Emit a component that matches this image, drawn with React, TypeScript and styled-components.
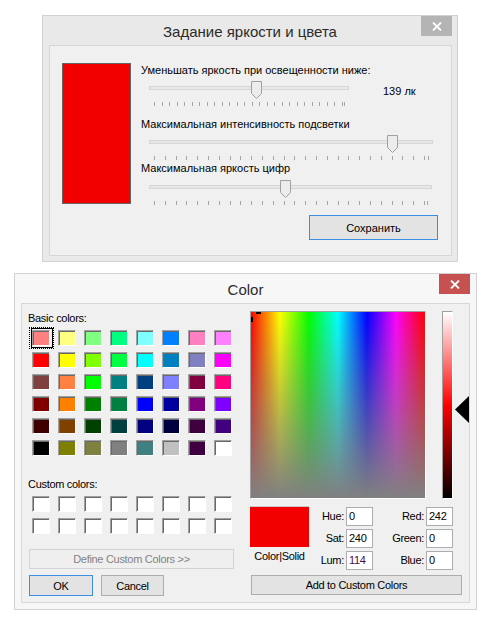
import React from "react";
import styled, { createGlobalStyle } from "styled-components";

const GlobalStyle = createGlobalStyle`
  html, body {
    margin: 0;
    padding: 0;
    background: #ffffff;
  }
  body {
    font-family: "Liberation Sans", Arial, sans-serif;
    color: #000000;
  }
  * {
    box-sizing: border-box;
  }
`;

const Page = styled.div`
  width: 495px;
  height: 627px;
  padding-top: 15px;
  display: flex;
  flex-direction: column;
`;

const Window = styled.div<{ $left: number; $top: number; $width: number; $height: number; $frame: string }>`
  margin-left: ${(p) => p.$left}px;
  margin-top: ${(p) => p.$top}px;
  width: ${(p) => p.$width}px;
  height: ${(p) => p.$height}px;
  background: ${(p) => p.$frame};
  border: 1px solid #d2d2d2;
  display: flex;
  flex-direction: column;
`;

const TitleBar = styled.div`
  height: 29px;
  display: grid;
  grid-template-columns: 1fr auto 1fr;
  align-items: center;
`;

const Title = styled.div`
  grid-column: 2;
  font-size: 15px;
  color: #2b2b2b;
  padding-top: 1px;
`;

const CloseButton = styled.div<{ $bg: string; $right: number }>`
  grid-column: 3;
  justify-self: end;
  align-self: start;
  margin-right: ${(p) => p.$right}px;
  width: 31px;
  height: 20px;
  background: ${(p) => p.$bg};
  display: flex;
  align-items: center;
  justify-content: center;
`;

const Panel = styled.div<{ $height: number; $side: number }>`
  margin: 0 ${(p) => p.$side}px 0 6px;
  height: ${(p) => p.$height}px;
  background: #f0f0f0;
  border: 1px solid #d7d7d7;
  display: flex;
  align-items: flex-start;
`;

/* ---------- brightness window ---------- */

const BrightnessBody = styled(Panel)`
  padding: 16px 13px 0 12px;
  gap: 10px;
`;

const ColorBlock = styled.div`
  margin-top: 1px;
  width: 69px;
  height: 141px;
  background: #f20000;
  border: 1px solid #646464;
  flex-shrink: 0;
`;

const SettingsColumn = styled.div`
  flex: 1;
  display: flex;
  flex-direction: column;
`;

const Label = styled.div<{ $mt?: number }>`
  margin-top: ${(p) => p.$mt ?? 0}px;
  font-size: 11px;
  line-height: 16px;
  white-space: nowrap;
`;

const SliderRow = styled.div<{ $mt: number }>`
  margin-top: ${(p) => p.$mt}px;
  display: flex;
  align-items: flex-start;
`;

const SliderBox = styled.div<{ $w: number }>`
  position: relative;
  width: ${(p) => p.$w}px;
  height: 26px;
  margin-left: 8px;
`;

const Track = styled.div`
  margin-top: 6px;
  height: 4px;
  border: 1px solid #d6d6d6;
  background: #e7e7e7;
`;

const Thumb = styled.svg`
  position: absolute;
  top: 1px;
`;

const TickStrip = styled.svg`
  display: block;
  margin-top: 12px;
`;

const ValueText = styled.div`
  margin-left: 34px;
  margin-top: 3px;
  font-size: 11px;
  line-height: 16px;
`;

const Button = styled.button<{ $w: number; $h: number; $default?: boolean; $mt?: number; $ml?: number }>`
  width: ${(p) => p.$w}px;
  height: ${(p) => p.$h}px;
  margin-top: ${(p) => p.$mt ?? 0}px;
  margin-left: ${(p) => p.$ml ?? 0}px;
  padding: 0;
  font-family: inherit;
  font-size: 11px;
  letter-spacing: inherit;
  color: #000000;
  background: #e3e3e3;
  border: 1px solid ${(p) => (p.$default ? "#3d8ee0" : "#adadad")};
  flex-shrink: 0;

  &:disabled {
    color: #838383;
    background: #efefef;
    border-color: #d3d3d3;
  }
`;

const SaveButton = styled(Button)`
  align-self: flex-end;
`;

/* ---------- color dialog ---------- */

const DialogBody = styled(Panel)`
  padding: 6px 0 0 6px;
  gap: 16px;
  letter-spacing: -0.3px;
`;

const LeftColumn = styled.div`
  width: 206px;
  display: flex;
  flex-direction: column;
`;

const SwatchGrid = styled.div<{ $mt: number }>`
  margin-top: ${(p) => p.$mt}px;
  margin-left: 4px;
  display: grid;
  grid-template-columns: repeat(8, 18px);
  grid-auto-rows: 16px;
  column-gap: 8px;
  row-gap: 6px;
`;

const Swatch = styled.div<{ $color: string; $selected?: boolean }>`
  position: relative;
  background: ${(p) => p.$color};
  border: 1px solid;
  border-color: #a0a0a0 #ffffff #ffffff #a0a0a0;
  box-shadow: inset 1px 1px 0 #696969;

  ${(p) =>
    p.$selected &&
    `
    &::before {
      content: "";
      position: absolute;
      top: -3px;
      left: -2px;
      right: -4px;
      bottom: -3px;
      border: 1px solid #000000;
    }
    &::after {
      content: "";
      position: absolute;
      top: -4px;
      left: -4px;
      right: -5px;
      bottom: -4px;
      border: 1px dotted #000000;
    }
  `}
`;

const ButtonRow = styled.div`
  margin-top: 6px;
  margin-left: 1px;
  display: flex;
  gap: 8px;
`;

const RightColumn = styled.div`
  margin-top: 1px;
  width: 219px;
  display: flex;
  flex-direction: column;
`;

const PickerRow = styled.div`
  display: flex;
  align-items: flex-start;
`;

const Spectrum = styled.div`
  position: relative;
  width: 176px;
  height: 188px;
  border: 1px solid;
  border-color: #a0a0a0 #ffffff #ffffff #a0a0a0;
  background:
    linear-gradient(to bottom, rgba(128, 128, 128, 0), #808080),
    linear-gradient(
      to right,
      #ff0000 0%,
      #ffff00 16.6%,
      #00ff00 33.3%,
      #00ffff 50%,
      #0000ff 66.6%,
      #ff00ff 83.3%,
      #ff0000 100%
    );
`;

const CrossArm = styled.div<{ $x: number; $y: number; $w: number; $h: number }>`
  position: absolute;
  left: ${(p) => p.$x}px;
  top: ${(p) => p.$y}px;
  width: ${(p) => p.$w}px;
  height: ${(p) => p.$h}px;
  background: #000000;
`;

const LumBar = styled.div`
  margin-left: 16px;
  width: 11px;
  height: 188px;
  border: 1px solid;
  border-color: #a0a0a0 #ffffff #ffffff #a0a0a0;
  background: linear-gradient(to bottom, #ffffff 0%, #ff0000 50%, #000000 100%);
`;

const ArrowLane = styled.div`
  position: relative;
  margin-left: 2px;
  width: 14px;
  height: 188px;
`;

const Arrow = styled.svg`
  position: absolute;
  left: 0;
`;

const ValuesSection = styled.div`
  margin-top: 7px;
  display: flex;
  align-items: flex-start;
`;

const SolidColumn = styled.div`
  width: 59px;
  display: flex;
  flex-direction: column;
  align-items: center;
`;

const SolidBox = styled.div`
  width: 59px;
  height: 41px;
  background: #f20000;
  border-top: 1px solid #c8c8c8;
`;

const SolidCaption = styled.div`
  margin-top: 1px;
  font-size: 11px;
  line-height: 16px;
  white-space: nowrap;
`;

const ValueGrid = styled.div`
  margin-top: 1px;
  display: grid;
  grid-template-columns: 37px 27px 53px 27px;
  grid-auto-rows: 19px;
  row-gap: 3px;
`;

const FieldLabel = styled.div`
  font-size: 11px;
  line-height: 19px;
  text-align: right;
  padding-right: 2px;
  white-space: nowrap;
`;

const Field = styled.div<{ $tint?: string }>`
  height: 19px;
  border: 1px solid #abadb3;
  background: #ffffff;
  font-size: 11px;
  line-height: 17px;
  padding-left: 2px;
  color: ${(p) => p.$tint ?? "#000000"};
`;

/* ---------- data ---------- */

const basicColors = [
  ["#ff8080", "#ffff80", "#80ff80", "#00ff80", "#80ffff", "#0080ff", "#ff80c0", "#ff80ff"],
  ["#ff0000", "#ffff00", "#80ff00", "#00ff40", "#00ffff", "#0080c0", "#8080c0", "#ff00ff"],
  ["#804040", "#ff8040", "#00ff00", "#008080", "#004080", "#8080ff", "#800040", "#ff0080"],
  ["#800000", "#ff8000", "#008000", "#008040", "#0000ff", "#0000a0", "#800080", "#8000ff"],
  ["#400000", "#804000", "#004000", "#004040", "#000080", "#000040", "#400040", "#400080"],
  ["#000000", "#808000", "#808040", "#808080", "#408080", "#c0c0c0", "#400040", "#ffffff"],
];

const fields = [
  { l: "Hue:", v: "0", r: "Red:", rv: "242" },
  { l: "Sat:", v: "240", r: "Green:", rv: "0" },
  { l: "Lum:", v: "114", r: "Blue:", rv: "0", tint: "#4a0a4a" },
];

function tickPositions(w: number, step: number) {
  const out: number[] = [];
  for (let x = 5; x <= w - 5 - 1; x += step) out.push(Math.round(x) + 0.5);
  out.push(w - 5 + 0.5);
  return out;
}

const CloseGlyph = () => (
  <svg width="10" height="9" viewBox="0 0 10 9">
    <path d="M1 0.5 L9 8.5 M9 0.5 L1 8.5" stroke="#ffffff" strokeWidth="1.8" />
  </svg>
);

const Slider = ({ width, value, step }: { width: number; value: number; step: number }) => {
  const left = 5 + value * (width - 10) - 5.5;
  return (
    <SliderBox $w={width}>
      <Track />
      <Thumb width="11" height="19" viewBox="0 0 11 19" style={{ left }}>
        <path
          d="M0.5 0.5 H10.5 V12.5 L5.5 17.5 L0.5 12.5 Z"
          fill="#ececec"
          stroke="#a0a0a0"
        />
      </Thumb>
      <TickStrip width={width} height="4">
        {tickPositions(width, step).map((x, i) => (
          <line key={i} x1={x} x2={x} y1="0" y2="4" stroke="#a6a6a6" />
        ))}
      </TickStrip>
    </SliderBox>
  );
};

const App = () => {
  const lumTop = (1 - 114 / 240) * 188 - 13.5;

  return (
    <>
      <GlobalStyle />
      <Page>
        <Window $left={42} $top={0} $width={416} $height={247} $frame="#e9e9e9">
          <TitleBar>
            <Title>Задание яркости и цвета</Title>
            <CloseButton $bg="#b4b4b4" $right={5}>
              <CloseGlyph />
            </CloseButton>
          </TitleBar>
          <BrightnessBody $height={211} $side={5}>
            <ColorBlock />
            <SettingsColumn>
              <Label>Уменьшать яркость при освещенности ниже:</Label>
              <SliderRow $mt={2}>
                <Slider width={200} value={0.54} step={7.5} />
                <ValueText>139 лк</ValueText>
              </SliderRow>
              <Label $mt={10}>Максимальная интенсивность подсветки</Label>
              <SliderRow $mt={2}>
                <Slider width={284} value={0.872} step={10.8} />
              </SliderRow>
              <Label>Максимальная яркость цифр</Label>
              <SliderRow $mt={3}>
                <Slider width={283} value={0.482} step={10.8} />
              </SliderRow>
              <SaveButton $w={129} $h={25} $mt={10} $default>
                Сохранить
              </SaveButton>
            </SettingsColumn>
          </BrightnessBody>
        </Window>

        <Window $left={14} $top={11} $width={463} $height={337} $frame="#f7f7f7">
          <TitleBar>
            <Title>Color</Title>
            <CloseButton $bg="#c75050" $right={6}>
              <CloseGlyph />
            </CloseButton>
          </TitleBar>
          <DialogBody $height={300} $side={6}>
            <LeftColumn>
              <Label>Basic colors:</Label>
              <SwatchGrid $mt={4}>
                {basicColors.flat().map((c, i) => (
                  <Swatch key={i} $color={c} $selected={i === 0} />
                ))}
              </SwatchGrid>
              <Label $mt={20}>Custom colors:</Label>
              <SwatchGrid $mt={4}>
                {Array.from({ length: 16 }).map((_, i) => (
                  <Swatch key={i} $color="#ffffff" />
                ))}
              </SwatchGrid>
              <Button $w={205} $h={20} $mt={15} $ml={1} disabled>
                Define Custom Colors &gt;&gt;
              </Button>
              <ButtonRow>
                <Button $w={64} $h={21} $default>
                  OK
                </Button>
                <Button $w={63} $h={21}>
                  Cancel
                </Button>
              </ButtonRow>
            </LeftColumn>

            <RightColumn>
              <PickerRow>
                <Spectrum>
                  <CrossArm $x={5} $y={0} $w={5} $h={2} />
                  <CrossArm $x={0} $y={5} $w={2} $h={5} />
                </Spectrum>
                <LumBar />
                <ArrowLane>
                  <Arrow width="14" height="27" viewBox="0 0 14 27" style={{ top: lumTop }}>
                    <polygon points="14,0 0,13.5 14,27" fill="#000000" />
                  </Arrow>
                </ArrowLane>
              </PickerRow>
              <ValuesSection>
                <SolidColumn>
                  <SolidBox />
                  <SolidCaption>Color|Solid</SolidCaption>
                </SolidColumn>
                <ValueGrid>
                  {fields.map((f) => (
                    <React.Fragment key={f.l}>
                      <FieldLabel>{f.l}</FieldLabel>
                      <Field $tint={f.tint}>{f.v}</Field>
                      <FieldLabel>{f.r}</FieldLabel>
                      <Field>{f.rv}</Field>
                    </React.Fragment>
                  ))}
                </ValueGrid>
              </ValuesSection>
              <Button $w={211} $h={20} $mt={5} $ml={1}>
                Add to Custom Colors
              </Button>
            </RightColumn>
          </DialogBody>
        </Window>
      </Page>
    </>
  );
};

export default App;
